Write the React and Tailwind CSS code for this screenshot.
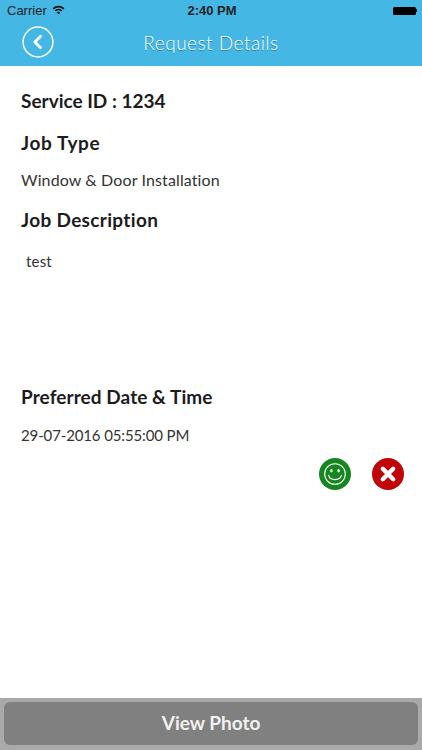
import React from "react";

function Wifi() {
  return (
    <svg width="13" height="10" viewBox="0 0 14 11" fill="none" className="ml-[5px] mb-[2px]">
      <path d="M0.5 3.6 A9.2 9.2 0 0 1 13.5 3.6 L12.2 4.9 A7.4 7.4 0 0 0 1.8 4.9 Z" fill="#111" />
      <path d="M2.8 5.9 A6 6 0 0 1 11.2 5.9 L9.9 7.2 A4.2 4.2 0 0 0 4.1 7.2 Z" fill="#111" />
      <path d="M5.1 8.2 A2.8 2.8 0 0 1 8.9 8.2 L7 10.2 Z" fill="#111" />
    </svg>
  );
}

function Back() {
  return (
    <svg width="32" height="32" viewBox="0 0 32 32" fill="none">
      <circle cx="16" cy="16" r="14.9" stroke="white" strokeWidth="1.5" />
      <path d="M18.6 10.2 L12.8 16 L18.6 21.8" stroke="white" strokeWidth="2.8" strokeLinecap="round" strokeLinejoin="round" />
    </svg>
  );
}

function Smile() {
  return (
    <svg width="32" height="32" viewBox="0 0 32 32" fill="none">
      <circle cx="16" cy="16" r="16" fill="#16861f" />
      <circle cx="16" cy="16" r="10.3" stroke="white" strokeWidth="1.1" />
      <ellipse cx="12.4" cy="12.8" rx="1.2" ry="1.8" fill="white" />
      <ellipse cx="19.6" cy="12.8" rx="1.2" ry="1.8" fill="white" />
      <path d="M9.6 17.4 C11 23 21 23 22.4 17.4" stroke="white" strokeWidth="1.2" strokeLinecap="round" />
    </svg>
  );
}

function Cross() {
  return (
    <svg width="32" height="32" viewBox="0 0 32 32" fill="none">
      <circle cx="16" cy="16" r="16" fill="#c00408" />
      <path d="M10.8 10.8 L21.2 21.2 M21.2 10.8 L10.8 21.2" stroke="white" strokeWidth="4.4" strokeLinecap="round" />
    </svg>
  );
}

export default function App() {
  return (
    <div className="flex h-[750px] w-[422px] flex-col overflow-hidden bg-white font-['Lato',sans-serif] text-[#1c1c1c]">
      <header className="flex h-[66px] flex-col bg-[#45b7e5]">
        <div className="grid h-[21px] grid-cols-3 items-center px-[7px] font-['Liberation_Sans',sans-serif] text-[#222]">
          <div className="flex items-center text-[13px]">
            Carrier
            <Wifi />
          </div>
          <div className="pl-[2px] text-center text-[13px] font-bold">2:40 PM</div>
          <div className="mr-[-2px] flex items-center justify-end">
            <div className="h-[8px] w-[23px] rounded-[1.5px] bg-black" />
            <div className="h-[3px] w-[1px] bg-black" />
          </div>
        </div>
        <div className="relative flex flex-1 items-center justify-center">
          <div className="absolute left-[22px] top-[5px]">
            <Back />
          </div>
          <h1 className="text-[19px] font-light tracking-[0.5px] text-white [text-shadow:0_1px_0_rgba(0,0,0,0.35)]">Request Details</h1>
        </div>
      </header>

      <main className="flex flex-1 flex-col px-[21px] pt-[23px]">
        <h2 className="text-[19px] leading-[23px] font-bold">Service ID : 1234</h2>
        <h2 className="mt-[19px] text-[19px] leading-[23px] font-bold tracking-[0.6px]">Job Type</h2>
        <p className="mt-[16px] text-[16px] leading-[20px] tracking-[0.12px] text-[#333]">Window &amp; Door Installation</p>
        <h2 className="mt-[18px] text-[19px] leading-[23px] font-bold tracking-[0.33px]">Job Description</h2>
        <p className="mt-[20px] h-[133px] pl-[5px] text-[15px] leading-[20px] tracking-[0.2px] text-[#333]">test</p>
        <h2 className="mt-[1px] text-[19px] leading-[23px] font-bold tracking-[0.07px]">Preferred Date &amp; Time</h2>
        <p className="mt-[17px] text-[15px] leading-[20px] tracking-[-0.13px] text-[#333]">29-07-2016 05:55:00 PM</p>
        <div className="mt-[13px] mr-[-3px] flex justify-end gap-[21px]">
          <Smile />
          <Cross />
        </div>
      </main>

      <footer className="h-[52px] bg-[#a9a9a9] px-[4px] pt-[4px]">
        <button className="flex h-[43px] w-full items-center justify-center rounded-[6px] bg-[#808080] text-[19px] font-bold text-[#f2f2f2]">
          View Photo
        </button>
      </footer>
    </div>
  );
}
